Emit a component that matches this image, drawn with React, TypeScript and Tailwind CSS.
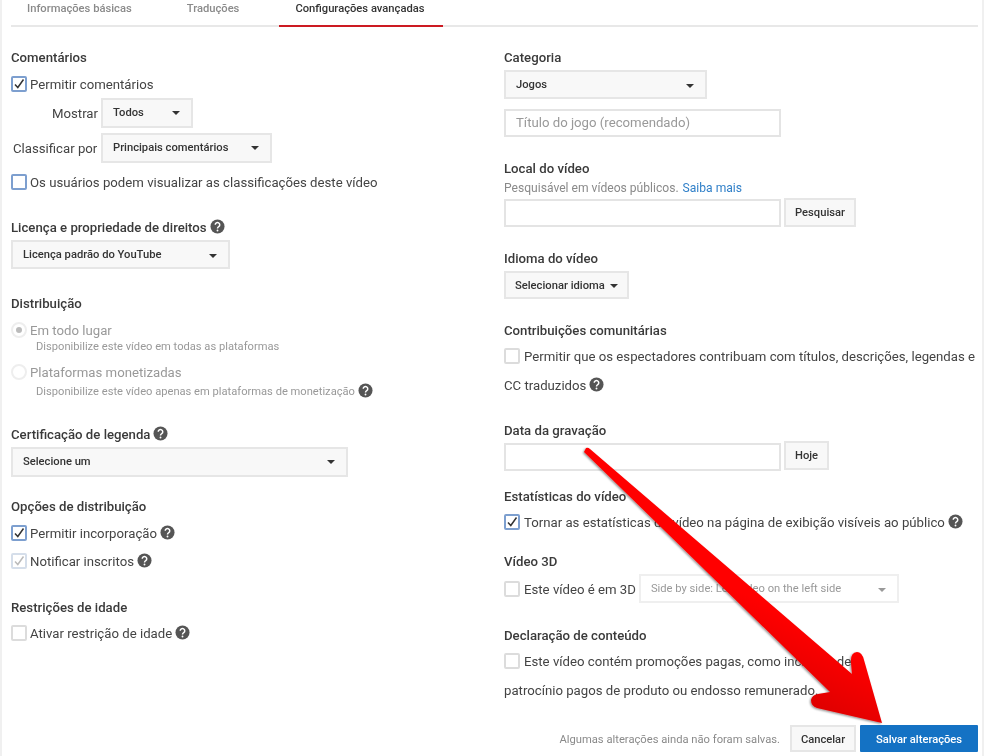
import type { ReactNode } from "react";

function Help({ className = "" }: { className?: string }) {
  return (
    <svg viewBox="0 0 16 16" className={`h-[15px] w-[15px] shrink-0 ${className}`}>
      <circle cx="8" cy="8" r="7.5" fill="#555" />
      <path d="M5.6 6.2a2.4 2.4 0 1 1 3.7 2c-.9.6-1.3 1-1.3 1.9" fill="none" stroke="#fff" strokeWidth="1.6" />
      <circle cx="8" cy="12.2" r="1" fill="#fff" />
    </svg>
  );
}

function Heading({ className = "", children }: { className?: string; children: ReactNode }) {
  return <div className={`flex h-5 items-center gap-[3px] pt-[2px] text-[13.2px] font-medium text-[#3a3a3a] ${className}`}>{children}</div>;
}

function Caret({ muted }: { muted?: boolean }) {
  return <span className={`h-0 w-0 border-x-[4px] border-t-[4px] border-x-transparent ${muted ? "border-t-[#999]" : "border-t-[#333]"}`} />;
}

function Select({ label, className, muted }: { label: string; className: string; muted?: boolean }) {
  return (
    <div
      className={`flex items-center justify-between border-2 pl-[10px] pr-[11px] text-[11.2px] font-medium ${
        muted ? "border-[#efefef] bg-white font-normal text-[#999]" : "border-[#e6e6e6] bg-[#f8f8f8] text-[#333]"
      } ${className}`}
    >
      <span>{label}</span>
      <Caret muted={muted} />
    </div>
  );
}

function Check({ checked, focused, muted }: { checked?: boolean; focused?: boolean; muted?: boolean }) {
  return (
    <span
      className={`flex h-4 w-4 shrink-0 items-center justify-center rounded-[2px] border-2 bg-white ${
        focused ? "border-[#7d9fcf]" : muted ? "border-[#d5deea]" : "border-[#dcdcdc]"
      }`}
    >
      {checked && (
        <svg viewBox="0 0 12 12" className="h-3 w-3">
          <path d="M2 6.5l2.8 3L10.5 1.5" fill="none" stroke={muted ? "#bbb" : "#333"} strokeWidth="1.5" />
        </svg>
      )}
    </span>
  );
}

function CheckRow({ className = "", children, box }: { className?: string; children: ReactNode; box: ReactNode }) {
  return (
    <div className={`flex h-5 items-center whitespace-nowrap text-[13.2px] text-[#444] ${className}`}>
      {box}
      <span className="pt-[2px]">{children}</span>
    </div>
  );
}

function Radio({ selected }: { selected?: boolean }) {
  return (
    <span className="flex h-4 w-4 shrink-0 items-center justify-center rounded-full border-2 border-[#eee] bg-white">
      {selected && <span className="h-[6px] w-[6px] rounded-full bg-[#bbb]" />}
    </span>
  );
}

function TextBox({ placeholder, className = "" }: { placeholder?: string; className?: string }) {
  return (
    <div className={`flex h-7 w-[276px] items-center border-2 border-[#e4e4e4] bg-white pl-[10px] text-[13.2px] text-[#999] ${className}`}>
      {placeholder}
    </div>
  );
}

function SmallButton({ label, className }: { label: string; className: string }) {
  return (
    <div className={`flex h-[29px] items-center justify-center border-2 border-[#e6e6e6] bg-[#f8f8f8] pt-[2px] text-[11.2px] font-medium text-[#333] ${className}`}>
      {label}
    </div>
  );
}

export default function App() {
  return (
    <div className="relative h-[756px] w-[984px] overflow-hidden border-x-2 border-[#f0f0f0] bg-white font-['Roboto',sans-serif] blur-[0.5px]">
      {/* tabs */}
      <div className="ml-[9px] mr-[4px] flex h-[27px] border-b-2 border-[#e8e8e8] text-[11.2px]">
        <div className="ml-4 pt-px font-medium text-[#8a8a8a]">Informações básicas</div>
        <div className="ml-[55px] pt-px font-medium text-[#8a8a8a]">Traduções</div>
        <div className="ml-10 h-[27px] w-[164px] border-b-2 border-[#cc1a22] pl-4 pt-px font-medium text-[#333]">Configurações avançadas</div>
      </div>

      <div className="flex">
        {/* left column */}
        <div className="w-[493px] shrink-0 pl-[9px]">
          <Heading className="mt-5">Comentários</Heading>
          <CheckRow className="mt-[7px] gap-[3px]" box={<Check checked focused />}>Permitir comentários</CheckRow>
          <div className="mt-1 flex items-center">
            <span className="w-[90px] whitespace-nowrap pr-[3px] pt-[2px] text-right text-[13.2px] text-[#444]">Mostrar</span>
            <Select label="Todos" className="h-[30px] w-[92px]" />
          </div>
          <div className="mt-[5px] flex items-center">
            <span className="ml-[2px] w-[88px] whitespace-nowrap pt-[2px] text-[13.2px] text-[#444]">Classificar por</span>
            <Select label="Principais comentários" className="h-[30px] w-[171px]" />
          </div>
          <CheckRow className="mt-[9px] gap-[3px]" box={<Check focused muted />}>Os usuários podem visualizar as classificações deste vídeo</CheckRow>

          <Heading className="mt-[25px]">Licença e propriedade de direitos <Help className="-mt-1" /></Heading>
          <Select label="Licença padrão do YouTube" className="mt-[3px] h-[29px] w-[219px] pt-[2px]" />

          <Heading className="mt-6">Distribuição</Heading>
          <div className="mt-2 flex h-[18px] items-center gap-[3px] text-[13.2px] text-[#999]"><Radio selected /><span className="pt-[2px]">Em todo lugar</span></div>
          <div className="ml-[25px] flex h-[14px] items-center pt-[2px] text-[11.15px] text-[#999]">Disponibilize este vídeo em todas as plataformas</div>
          <div className="mt-[10px] flex h-[18px] items-center gap-[3px] text-[13.2px] text-[#999]"><Radio /><span className="pt-[2px]">Plataformas monetizadas</span></div>
          <div className="ml-[25px] mt-[3px] flex h-[14px] items-center gap-[3px] whitespace-nowrap pt-[2px] text-[11.15px] text-[#999]">
            Disponibilize este vídeo apenas em plataformas de monetização <Help className="-mt-1" />
          </div>

          <Heading className="mt-[26px]">Certificação de legenda <Help className="-mt-1" /></Heading>
          <Select label="Selecione um" className="mt-[3px] h-[30px] w-[337px]" />

          <Heading className="mt-[19px]">Opções de distribuição</Heading>
          <CheckRow className="mt-[7px] gap-[3px]" box={<Check checked focused />}><span className="flex items-center gap-[3px]">Permitir incorporação <Help className="-mt-1" /></span></CheckRow>
          <CheckRow className="mt-2 gap-[3px]" box={<Check checked muted />}><span className="flex items-center gap-[3px]">Notificar inscritos <Help className="-mt-1" /></span></CheckRow>

          <Heading className="mt-[26px]">Restrições de idade</Heading>
          <CheckRow className="mt-[6px] gap-[3px]" box={<Check />}><span className="flex items-center gap-[3px]">Ativar restrição de idade <Help className="-mt-1" /></span></CheckRow>
        </div>

        {/* right column */}
        <div className="min-w-0 flex-1 pl-[9px]">
          <Heading className="mt-5">Categoria</Heading>
          <Select label="Jogos" className="mt-[3px] h-[29px] w-[203px] pl-[9px] pt-[2px]" />
          <TextBox placeholder="Título do jogo (recomendado)" className="mt-[10px] w-[277px] pl-[9px]" />

          <Heading className="mt-[21px]">Local do vídeo</Heading>
          <div className="mt-[2px] flex h-[14px] items-center gap-1 pt-[2px] text-[12.1px] text-[#8a8a8a]">
            Pesquisável em vídeos públicos. <span className="text-[#2f7fc8]">Saiba mais</span>
          </div>
          <div className="mt-1 flex items-start gap-[3px]">
            <TextBox className="mt-px w-[277px]" />
            <SmallButton label="Pesquisar" className="w-[72px]" />
          </div>

          <Heading className="mt-[21px]">Idioma do vídeo</Heading>
          <div className="mt-[3px] flex h-7 w-[125px] items-center gap-[5px] border-2 border-[#e6e6e6] bg-[#f8f8f8] pl-[9px] pt-[2px] text-[11.2px] font-medium text-[#333]">
            Selecionar idioma <Caret />
          </div>

          <Heading className="mt-[21px]">Contribuições comunitárias</Heading>
          <CheckRow className="mt-[6px] gap-1" box={<Check />}>Permitir que os espectadores contribuam com títulos, descrições, legendas e</CheckRow>
          <div className="mt-[9px] flex h-5 items-center gap-[3px] pt-[2px] text-[13.2px] text-[#444]">CC traduzidos <Help className="-mt-1" /></div>

          <Heading className="mt-[25px]">Data da gravação</Heading>
          <div className="mt-px flex items-start gap-[3px]">
            <TextBox className="mt-[2px] w-[277px]" />
            <SmallButton label="Hoje" className="w-[45px]" />
          </div>

          <Heading className="mt-[15px]">Estatísticas do vídeo</Heading>
          <CheckRow className="mt-[6px] gap-1" box={<Check checked focused />}>
            <span className="flex items-center gap-[3px]">Tornar as estatísticas do vídeo na página de exibição visíveis ao público <Help className="-mt-1" /></span>
          </CheckRow>

          <Heading className="mt-[19px]">Vídeo 3D</Heading>
          <div className="mt-[3px] flex h-[29px] items-center">
            <CheckRow className="gap-1" box={<Check />}>Este vídeo é em 3D</CheckRow>
            <Select muted label="Side by side: Left video on the left side" className="ml-[3px] h-[29px] w-[260px] pt-[2px]" />
          </div>

          <Heading className="mt-[22px]">Declaração de conteúdo</Heading>
          <CheckRow className="mt-[6px] gap-1" box={<Check />}>Este vídeo contém promoções pagas, como inclusão de</CheckRow>
          <div className="mt-[9px] flex h-5 items-center pt-[2px] text-[13.2px] text-[#444]">patrocínio pagos de produto ou endosso remunerado.</div>

          <div className="mt-[25px] flex h-[27px] items-center justify-end pr-[4px]">
            <span className="mr-[10px] pt-[4px] text-[11.2px] text-[#8a8a8a]">Algumas alterações ainda não foram salvas.</span>
            <div className="flex h-[27px] w-[66px] items-center justify-center border-2 border-[#e6e6e6] bg-[#f8f8f8] pt-[3px] text-[11.2px] font-medium text-[#333]">Cancelar</div>
            <div className="ml-1 flex h-[27px] w-[118px] items-center justify-center rounded-[1px] bg-[#1472c4] pt-[3px] text-[11.2px] font-medium text-white">Salvar alterações</div>
          </div>
        </div>
      </div>

      {/* annotation arrow over the page */}
      <svg className="absolute left-[-2px] top-0 h-[756px] w-[984px]" viewBox="0 0 984 756">
        <defs>
          <linearGradient id="arrow-fill" gradientUnits="userSpaceOnUse" x1="850" y1="650" x2="815" y2="715">
            <stop offset="0" stopColor="#ff0000" />
            <stop offset="1" stopColor="#dc0000" />
          </linearGradient>
          <filter id="arrow-shadow" x="-5%" y="-5%" width="110%" height="110%">
            <feDropShadow dx="-1" dy="1" stdDeviation="1.2" floodColor="#000" floodOpacity="0.45" />
          </filter>
        </defs>
        <path
          d="M586 448 Q588 447 590 449 L852 674 L851 663 Q850 653 857 652 Q862 652 864 660 L882 723 L817 708 Q811 706 811 700 Q812 695 818 694 L830 692 L584 452 Z"
          fill="url(#arrow-fill)"
          filter="url(#arrow-shadow)"
        />
      </svg>
    </div>
  );
}
